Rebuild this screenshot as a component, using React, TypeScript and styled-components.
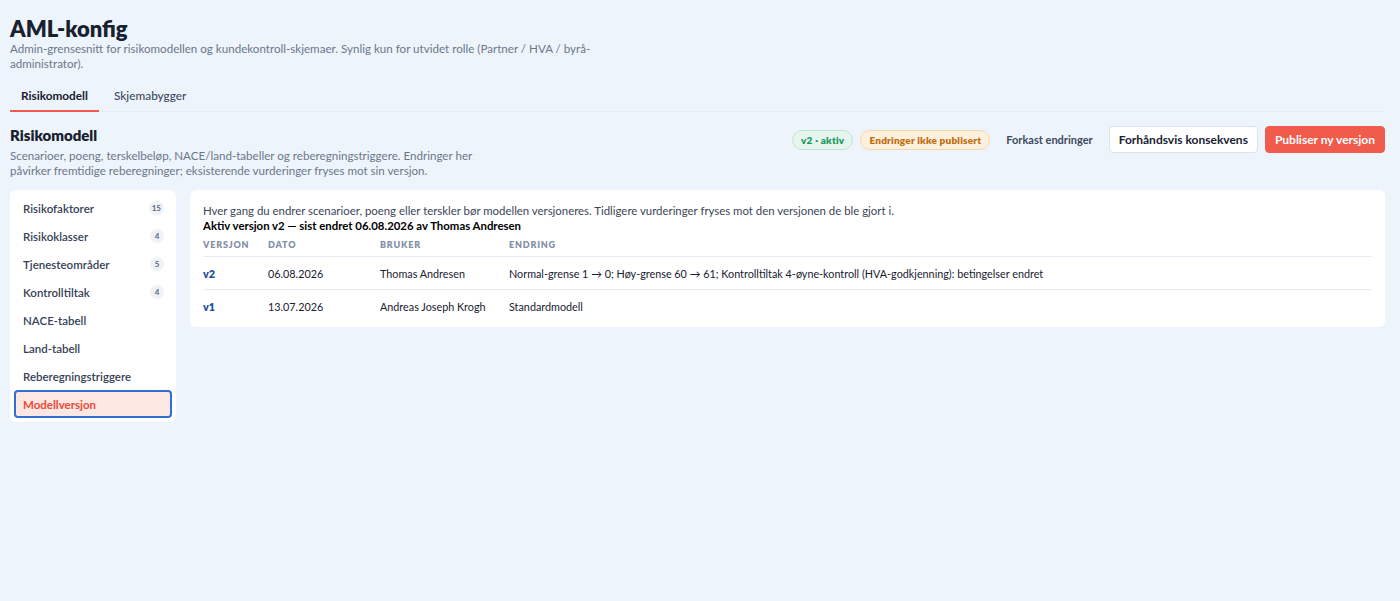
import React from 'react'
import styled, { createGlobalStyle } from 'styled-components'

const GlobalStyle = createGlobalStyle`
    *, *::before, *::after {
        box-sizing: border-box;
    }

    html, body {
        margin: 0;
        background: #eef4fc;
        font-family: Lato, 'Noto Sans', sans-serif;
        color: #1b2434;
    }
`

const COLORS = {
    ink: '#18212f',
    muted: '#6b778a',
    body: '#3b4658',
    line: '#e6ecf3',
    red: '#f05b4b',
    blue: '#1d4f9c',
}

const Page = styled.div`
    padding: 17px 15px 40px 10px;
`

const Title = styled.h1`
    font-size: 22px;
    font-weight: 800;
    line-height: 24px;
    margin: 0;
    color: ${COLORS.ink};
`

const Lead = styled.p<{ $width: number }>`
    color: ${COLORS.muted};
    font-size: 11.6px;
    line-height: 15px;
    margin: 0;
    max-width: ${({ $width }) => $width}px;
`

const Tabs = styled.div`
    border-bottom: 1px solid #e3ebf5;
    display: flex;
    gap: 4px;
    margin-top: 10px;
`

const Tab = styled.div<{ $active?: boolean }>`
    border-bottom: 2px solid ${({ $active }) => ($active ? COLORS.red : 'transparent')};
    color: ${({ $active }) => ($active ? COLORS.ink : '#3d4a5e')};
    font-size: 11.8px;
    font-weight: ${({ $active }) => ($active ? 700 : 500)};
    line-height: 16px;
    margin-bottom: -1px;
    padding: 7px 11px 6px;
`

const SectionHead = styled.div`
    align-items: flex-start;
    display: flex;
    justify-content: space-between;
    margin-top: 13px;
`

const SectionTitle = styled.h2`
    font-size: 15px;
    font-weight: 800;
    line-height: 20px;
    margin: 0 0 3px;
    color: ${COLORS.ink};
`

const Actions = styled.div`
    align-items: center;
    display: flex;
    gap: 7px;
    margin-top: 1px;
`

const Badge = styled.span<{ $tone: 'green' | 'amber' }>`
    background: ${({ $tone }) => ($tone === 'green' ? '#e6f6ef' : '#fdf1de')};
    border: 1px solid ${({ $tone }) => ($tone === 'green' ? '#bfe6d2' : '#f6d7a6')};
    border-radius: 999px;
    color: ${({ $tone }) => ($tone === 'green' ? '#1c9a5e' : '#c06d10')};
    font-size: 10px;
    font-weight: 800;
    letter-spacing: 0.02em;
    line-height: 18px;
    padding: 0 8px;
`

const GhostButton = styled.button`
    background: none;
    border: 0;
    color: #3d4a5e;
    font-family: inherit;
    font-size: 11px;
    font-weight: 700;
    padding: 0 9px;
`

const Button = styled.button<{ $primary?: boolean }>`
    background: ${({ $primary }) => ($primary ? COLORS.red : '#ffffff')};
    border: 1px solid ${({ $primary }) => ($primary ? COLORS.red : '#dbe3ed')};
    border-radius: 4px;
    color: ${({ $primary }) => ($primary ? '#ffffff' : COLORS.ink)};
    font-family: inherit;
    font-size: 12px;
    font-weight: 700;
    height: 27px;
    padding: 0 9px;
`

const Layout = styled.div`
    align-items: start;
    display: grid;
    gap: 14px;
    grid-template-columns: 166px 1fr;
    margin-top: 12px;
`

const Sidebar = styled.nav`
    background: #ffffff;
    border-radius: 6px;
    display: flex;
    flex-direction: column;
    padding: 4px;
`

const NavItem = styled.div<{ $active?: boolean }>`
    align-items: center;
    background: ${({ $active }) => ($active ? '#fde7e3' : 'transparent')};
    border: 2px solid ${({ $active }) => ($active ? '#2f6fd6' : 'transparent')};
    border-radius: 4px;
    color: ${({ $active }) => ($active ? '#ee4a38' : '#364256')};
    display: flex;
    font-size: 11.5px;
    font-weight: ${({ $active }) => ($active ? 700 : 600)};
    height: 28px;
    justify-content: space-between;
    padding: 0 6px 0 7px;
`

const Count = styled.span`
    background: #eff3f8;
    border-radius: 999px;
    color: #5b6880;
    font-size: 8px;
    font-weight: 700;
    line-height: 14px;
    min-width: 14px;
    padding: 0 3px;
    text-align: center;
`

const Card = styled.section`
    background: #ffffff;
    border-radius: 6px;
    padding: 13px 13px 4px;
`

const Note = styled.p`
    color: ${COLORS.body};
    font-size: 11.4px;
    line-height: 15px;
    margin: 0;
`

const Strong = styled(Note)`
    color: #000000;
    font-weight: 700;
`

const Table = styled.table`
    border-collapse: collapse;
    margin-top: 2px;
    width: 100%;
`

const Th = styled.th<{ $width?: number }>`
    color: #8391a6;
    font-size: 9px;
    font-weight: 800;
    letter-spacing: 0.09em;
    line-height: 11px;
    padding: 4px 0 6px;
    text-align: left;
    text-transform: uppercase;
    width: ${({ $width }) => ($width ? `${$width}px` : 'auto')};
`

const Td = styled.td<{ $version?: boolean }>`
    border-top: 1px solid ${COLORS.line};
    color: ${({ $version }) => ($version ? COLORS.blue : COLORS.ink)};
    font-size: 10.8px;
    font-weight: ${({ $version }) => ($version ? 800 : 400)};
    height: 33px;
    padding: 0;
`

const nav = [
    { label: 'Risikofaktorer', count: 15 },
    { label: 'Risikoklasser', count: 4 },
    { label: 'Tjenesteområder', count: 5 },
    { label: 'Kontrolltiltak', count: 4 },
    { label: 'NACE-tabell' },
    { label: 'Land-tabell' },
    { label: 'Reberegningstriggere' },
    { label: 'Modellversjon', active: true },
]

const versions = [
    {
        version: 'v2',
        date: '06.08.2026',
        user: 'Thomas Andresen',
        change: 'Normal-grense 1 → 0; Høy-grense 60 → 61; Kontrolltiltak 4-øyne-kontroll (HVA-godkjenning): betingelser endret',
    },
    { version: 'v1', date: '13.07.2026', user: 'Andreas Joseph Krogh', change: 'Standardmodell' },
]

export default function App() {
    return (
        <Page>
            <GlobalStyle />
            <Title>AML-konfig</Title>
            <Lead $width={585}>
                Admin-grensesnitt for risikomodellen og kundekontroll-skjemaer. Synlig kun for utvidet rolle
                (Partner / HVA / byrå-administrator).
            </Lead>
            <Tabs>
                <Tab $active>Risikomodell</Tab>
                <Tab>Skjemabygger</Tab>
            </Tabs>
            <SectionHead>
                <div>
                    <SectionTitle>Risikomodell</SectionTitle>
                    <Lead $width={462}>
                        Scenarioer, poeng, terskelbeløp, NACE/land-tabeller og reberegningstriggere. Endringer her
                        påvirker fremtidige reberegninger; eksisterende vurderinger fryses mot sin versjon.
                    </Lead>
                </div>
                <Actions>
                    <Badge $tone="green">v2 · aktiv</Badge>
                    <Badge $tone="amber">Endringer ikke publisert</Badge>
                    <GhostButton>Forkast endringer</GhostButton>
                    <Button>Forhåndsvis konsekvens</Button>
                    <Button $primary>Publiser ny versjon</Button>
                </Actions>
            </SectionHead>
            <Layout>
                <Sidebar>
                    {nav.map((item) => (
                        <NavItem key={item.label} $active={item.active}>
                            {item.label}
                            {item.count ? <Count>{item.count}</Count> : null}
                        </NavItem>
                    ))}
                </Sidebar>
                <Card>
                    <Note>
                        Hver gang du endrer scenarioer, poeng eller terskler bør modellen versjoneres. Tidligere
                        vurderinger fryses mot den versjonen de ble gjort i.
                    </Note>
                    <Strong>Aktiv versjon v2 — sist endret 06.08.2026 av Thomas Andresen</Strong>
                    <Table>
                        <thead>
                            <tr>
                                <Th $width={65}>Versjon</Th>
                                <Th $width={112}>Dato</Th>
                                <Th $width={129}>Bruker</Th>
                                <Th>Endring</Th>
                            </tr>
                        </thead>
                        <tbody>
                            {versions.map((row) => (
                                <tr key={row.version}>
                                    <Td $version>{row.version}</Td>
                                    <Td>{row.date}</Td>
                                    <Td>{row.user}</Td>
                                    <Td>{row.change}</Td>
                                </tr>
                            ))}
                        </tbody>
                    </Table>
                </Card>
            </Layout>
        </Page>
    )
}
